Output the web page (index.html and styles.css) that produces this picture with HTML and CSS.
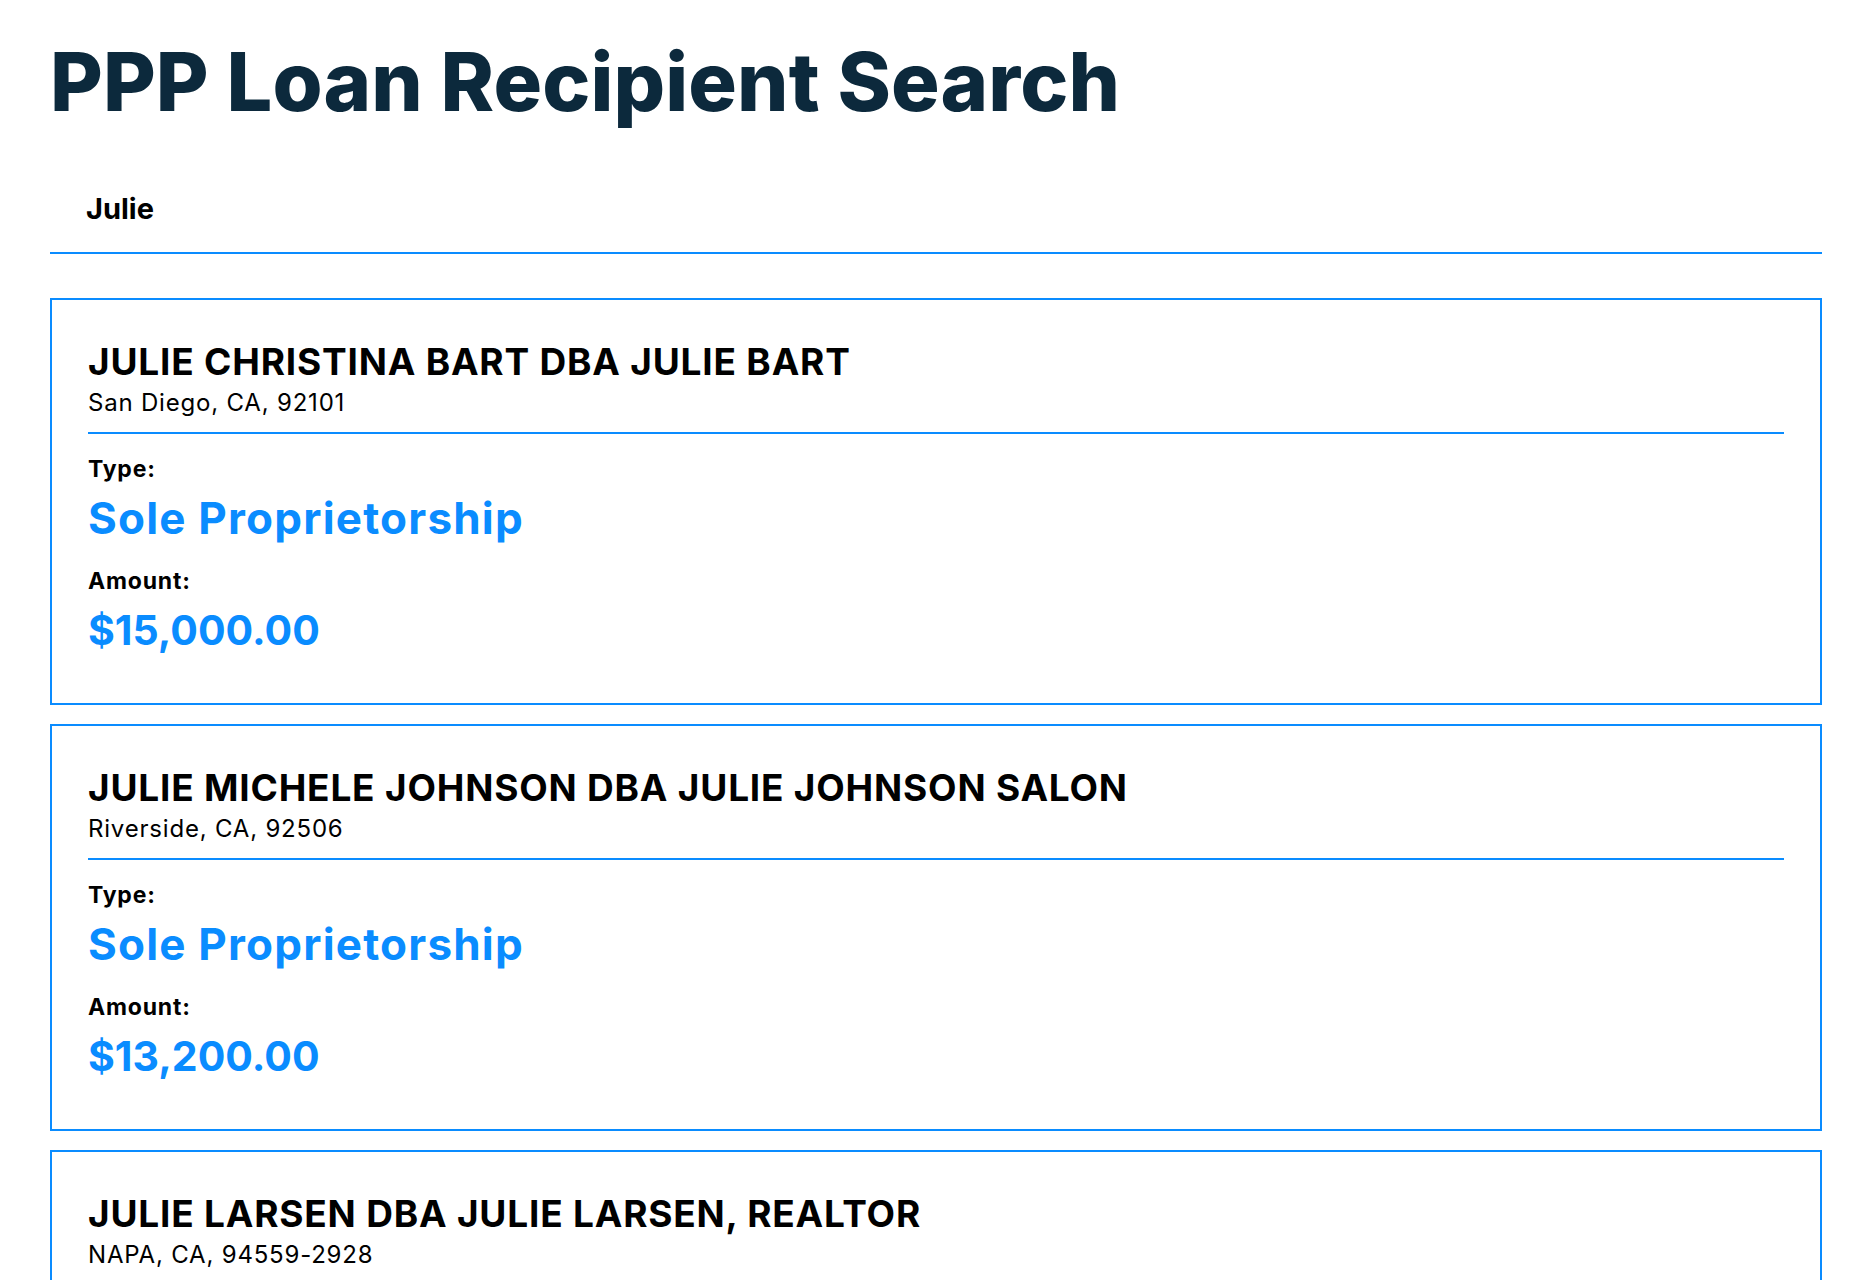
FILE: index.html
```html
<!DOCTYPE html>
<html lang="en">
<head>
<meta charset="UTF-8" />
<meta name="viewport" content="width=device-width, initial-scale=1.0" />
<title>PPP Loan Recipient Search</title>
<link rel="stylesheet" href="styles.css">
</head>
<body>
<div class="page">
    <h1 class="title">PPP Loan Recipient Search</h1>
    <div class="search">Julie</div>
    <div class="results">
        <div class="card">
            <div class="card-head">
                <h2 class="name">JULIE CHRISTINA BART DBA JULIE BART</h2>
                <div class="place">San Diego, CA, 92101</div>
            </div>
            <div class="label">Type:</div>
            <div class="value type">Sole Proprietorship</div>
            <div class="label">Amount:</div>
            <div class="value amount">$15,000.00</div>
        </div>
        <div class="card">
            <div class="card-head">
                <h2 class="name">JULIE MICHELE JOHNSON DBA JULIE JOHNSON SALON</h2>
                <div class="place">Riverside, CA, 92506</div>
            </div>
            <div class="label">Type:</div>
            <div class="value type">Sole Proprietorship</div>
            <div class="label">Amount:</div>
            <div class="value amount">$13,200.00</div>
        </div>
        <div class="card">
            <div class="card-head">
                <h2 class="name">JULIE LARSEN DBA JULIE LARSEN, REALTOR</h2>
                <div class="place">NAPA, CA, 94559-2928</div>
            </div>
            <div class="label">Type:</div>
            <div class="value type">Sole Proprietorship</div>
            <div class="label">Amount:</div>
            <div class="value amount">$20,833.00</div>
        </div>
    </div>
</div>
</body>
</html>
```

FILE: styles.css
```css
:root {
    --navy: #0c293c;
    --blue: #0a8cff;
    --text: #000;
}
* {
    margin: 0;
    padding: 0;
    box-sizing: border-box;
}
body {
    font-family: Inter, "Noto Sans", sans-serif;
    color: var(--text);
    background: #fff;
}
.page {
    padding: 0 36px 0 50px;
}
.title {
    margin-top: 33px;
    font-size: 81px;
    line-height: 98px;
    font-weight: 800;
    letter-spacing: 0.1px;
    color: var(--navy);
}
.search {
    margin-top: 60px;
    padding: 0 0 26px 36px;
    font-size: 29px;
    line-height: 35px;
    font-weight: 700;
    border-bottom: 2px solid var(--blue);
}
.results {
    margin-top: 44px;
    display: flex;
    flex-direction: column;
    gap: 19px;
}
.card {
    border: 2px solid var(--blue);
    padding: 38px 36px 48px;
}
.card-head {
    padding-bottom: 15px;
    border-bottom: 2px solid var(--blue);
    margin-bottom: 21px;
}
.name {
    font-size: 37px;
    line-height: 48px;
    font-weight: 700;
    letter-spacing: 0.8px;
}
.place {
    margin-top: 2px;
    font-size: 24px;
    line-height: 29px;
    letter-spacing: 0.8px;
}
.label {
    font-size: 23px;
    line-height: 28px;
    font-weight: 700;
    letter-spacing: 0.8px;
}
.value {
    color: var(--blue);
    font-weight: 700;
}
.type {
    font-size: 44px;
    line-height: 53px;
    margin: 9px 0 22px;
    letter-spacing: 1.2px;
}
.amount {
    font-size: 41px;
    line-height: 50px;
    margin-top: 10px;
}
```
